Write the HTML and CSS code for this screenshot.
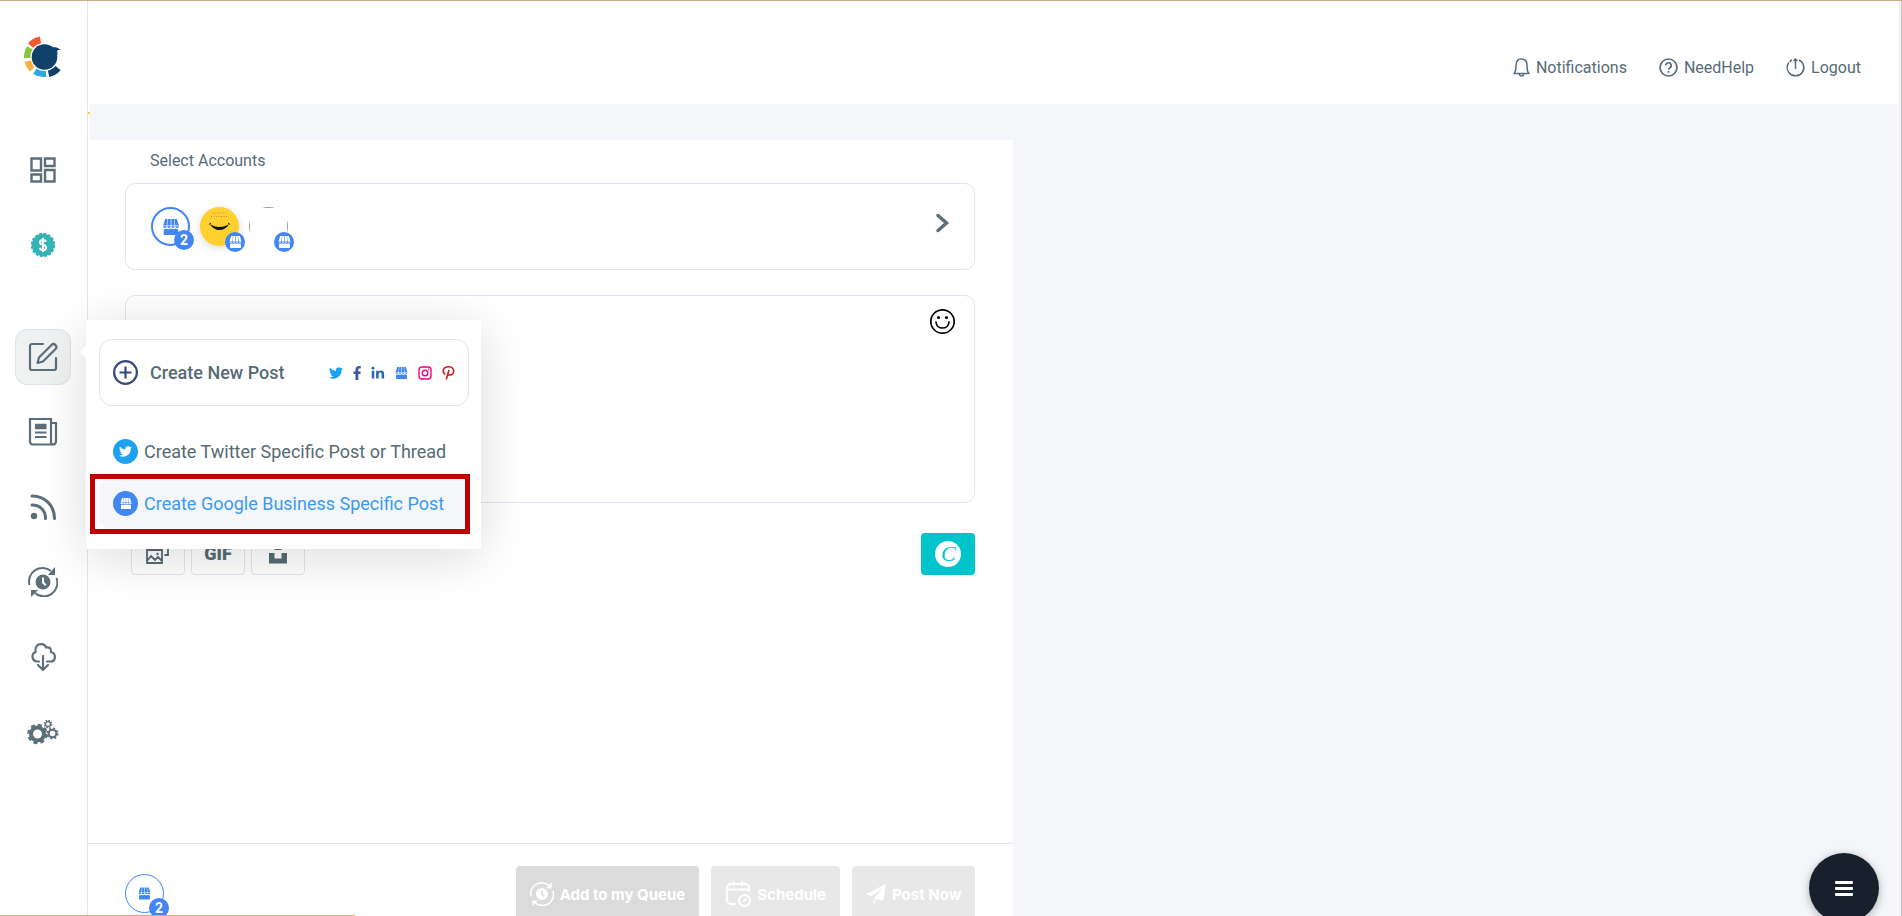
FILE: index.html
```html
<!DOCTYPE html>
<html lang="en">
<head>
    <meta charset="UTF-8">
    <meta name="viewport" content="width=device-width, initial-scale=1.0">
    <title>Create Post</title>
    <link rel="stylesheet" href="styles.css">
</head>
<body>

    <!-- shared icons -->
    <svg class="sprite" aria-hidden="true">
        <symbol id="store" viewBox="0 0 24 22">
            <path d="M4 0h3.3l-1 9H1.2zM8 0h3.5v9H7zM12.5 0H16l1 9h-4.5zM16.7 0H20l2.8 9h-5z"/>
            <path d="M1 10h5a2.5 2.5 0 0 1-5 0zM6.7 10h5a2.5 2.5 0 0 1-5 0zM12.3 10h5a2.5 2.5 0 0 1-5 0zM18 10h5a2.5 2.5 0 0 1-5 0z"/>
            <path d="M2 14c1 .4 2.4.2 3.5-.8 1.5 1.3 4 1.3 6.500 0 2.5 1.3 5 1.3 6.5 0 1 1 2.500 1.2 3.5.8v8H2z"/>
        </symbol>
        <symbol id="twitter" viewBox="0 0 24 24">
            <path d="M24 4.6a10 10 0 0 1-2.8.8 5 5 0 0 0 2.1-2.7 10 10 0 0 1-3.1 1.2 4.9 4.9 0 0 0-8.4 4.5A14 14 0 0 1 1.7 3.2a4.9 4.9 0 0 0 1.5 6.5 5 5 0 0 1-2.2-.6v.1a4.9 4.9 0 0 0 3.9 4.8 5 5 0 0 1-2.2.1 4.9 4.9 0 0 0 4.6 3.4A10 10 0 0 1 0 19.5a14 14 0 0 0 21.5-12.4A10 10 0 0 0 24 4.6z"/>
        </symbol>
        <symbol id="recycle" viewBox="0 0 30 30">
            <path d="M1.5 18A13.5 13.5 0 0 1 23 4M28.5 11A13.5 13.5 0 0 1 7 26" fill="none" stroke="currentColor" stroke-width="2"/>
            <path d="M27 0v8h-7zM3 30v-7h7z"/>
            <path fill-rule="evenodd" d="M15 7.5a7.5 7.5 0 1 0 0 15 7.5 7.5 0 0 0 0-15zM14 10.5h2v4.500l2.5 2.5-1.4 1.4L14 16z"/>
        </symbol>
    </svg>

    <div class="app">
        <aside class="sidebar">
            <a href="#" class="logo" aria-label="Home">
                <svg width="38" height="42" viewBox="0 0 38 42">
                    <g fill="none" stroke-width="7">
                        <path d="M6.5 9.5A18 18 0 0 1 16.5 4" stroke="#f15a2b"/>
                        <path d="M3.5 22A17 17 0 0 1 6 12" stroke="#8bc53f"/>
                        <path d="M8.5 33A18 18 0 0 1 4 25" stroke="#fbb040"/>
                        <path d="M22 37.5A17 17 0 0 1 11 35" stroke="#28a9e1"/>
                        <path d="M34 32A17 17 0 0 1 24.5 37.5" stroke="#0f4069"/>
                    </g>
                    <circle cx="20.5" cy="21" r="14" fill="#fff"/>
                    <circle cx="20.5" cy="21" r="12.8" fill="#0f4069"/>
                    <path d="M26 11c3 1 4-.5 6.5.5 1.5.5 2.5 1.5 4.5 1.7-1.5.9-3 .5-4 1.8l1 4z" fill="#0f4069"/>
                </svg>
            </a>

            <nav class="menu">
                <a href="#" class="menu-item" aria-label="Dashboard">
                    <svg width="26" height="26" viewBox="0 0 26 26" fill="none" stroke="currentColor" stroke-width="2.4">
                        <path d="M1.5 1.5H11v12H1.5zM15 1.5h9.500V9H15zM1.5 17.5H11v7H1.5zM15 13h9.500v11.500H15z"/>
                    </svg>
                </a>
                <a href="#" class="menu-item money" aria-label="Billing">
                    <svg width="26" height="26" viewBox="0 0 26 26">
                        <circle cx="13" cy="13" r="11" fill="#34b3b5"/>
                        <circle cx="13" cy="13" r="10.7" fill="none" stroke="#34b3b5" stroke-width="3" stroke-dasharray="3 1.202"/>
                        <path d="M16.2 9.7c-.5-1.2-1.7-1.700-3.2-1.7-1.7 0-3 .9-3 2.4 0 3.3 6.2 1.6 6.2 5 0 1.6-1.5 2.6-3.2 2.6s-3-.7-3.4-2.2M13 6v14" fill="none" stroke="#fff" stroke-width="2"/>
                    </svg>
                </a>

                <div class="menu-group">
                    <a href="#" class="menu-item active" aria-label="Create post">
                        <svg width="28" height="28" viewBox="0 0 28 28" fill="none" stroke="currentColor" stroke-width="2.2" stroke-linejoin="round" stroke-linecap="round">
                            <path d="M14 1H3a2 2 0 0 0-2 2v22a2 2 0 0 0 2 2h22a2 2 0 0 0 2-2V15"/>
                            <path d="M8.5 20l1.500-5.500L22.500 2a2.800 2.800 0 0 1 4 4L14 18.500z"/>
                        </svg>
                    </a>

                    <div class="popup">
                        <a href="#" class="popup-card">
                            <svg width="25" height="25" viewBox="0 0 25 25" fill="none" stroke="#334b7d" stroke-width="2.2">
                                <circle cx="12.5" cy="12.5" r="11.4"/>
                                <path d="M12.5 6.5v12M6.5 12.5h12"/>
                            </svg>
                            <span class="popup-title">Create New Post</span>
                            <span class="networks">
                                <svg width="14" height="14" fill="#1da1f2"><use href="#twitter"/></svg>
                                <svg width="8" height="14" viewBox="0 0 8 14" fill="#3b5998"><path d="M2.500 14V8H.5V5.500h2v-2C2.500 1.300 3.800 0 6 0h1.800v2.400H6.500c-1 0-1.200.5-1.200 1.200v1.900h2.400L7.400 8H5.300v6z"/></svg>
                                <svg width="14" height="14" viewBox="0 0 15 14" fill="#2867b2"><path d="M.8 4.500h2.700V13H.8zM5.500 4.500h2.600v1.200c1-2 6-2.200 6 2.300v5h-2.700V8.500c0-2.800-3.200-2.500-3.200 0V13H5.500z"/><circle cx="2.200" cy="1.800" r="1.600"/></svg>
                                <svg width="13" height="12" fill="#4285f4"><use href="#store"/></svg>
                                <svg width="14" height="14" viewBox="0 0 14 14" fill="none" stroke="#f0047f" stroke-width="1.400"><rect x="1" y="1" width="12" height="12" rx="3"/><circle cx="7" cy="7" r="2.800"/><path d="M10 3.500h1"/></svg>
                                <svg width="13" height="14" viewBox="0 0 13 14" fill="none" stroke="#c8232c" stroke-width="1.600"><path d="M3.300 8.300C-.8 5.500 1.500.8 6.500.8c6.500 0 6.800 8.200 1.500 8.200-1.200 0-2-.6-2.200-1.300M7 4L4.200 13.500"/></svg>
                            </span>
                        </a>
                        <a href="#" class="popup-row">
                            <span class="round twitter"><svg width="13" height="13"><use href="#twitter"/></svg></span>
                            Create Twitter Specific Post or Thread
                        </a>
                        <a href="#" class="popup-row selected">
                            <span class="round"><svg width="12" height="11"><use href="#store"/></svg></span>
                            Create Google Business Specific Post
                        </a>
                    </div>
                </div>

                <a href="#" class="menu-item" aria-label="Content">
                    <svg width="28" height="28" viewBox="0 0 28 28" fill="none" stroke="currentColor" stroke-width="2.2">
                        <path d="M22 24V1H1v22.500a3 3 0 0 0 3 3h20a3 3 0 0 0 3-3V5h-5v19c0 1.500.8 2.500 2 2.500"/>
                        <path d="M6 8.500h11.500" stroke-width="5.500"/>
                        <path d="M6 14.500h11.500M6 19h11.500"/>
                    </svg>
                </a>
                <a href="#" class="menu-item" aria-label="Feeds">
                    <svg width="26" height="26" viewBox="0 0 26 26" fill="none" stroke="currentColor" stroke-width="3" stroke-linecap="round">
                        <path d="M2 2c13 0 22.500 9.500 22.500 22.500M2 11c8 0 13.500 5.500 13.500 13.500"/>
                        <circle cx="4" cy="22" r="3.200" fill="currentColor" stroke="none"/>
                    </svg>
                </a>
                <a href="#" class="menu-item" aria-label="Queue">
                    <svg width="30" height="30"><use href="#recycle"/></svg>
                </a>
                <a href="#" class="menu-item" aria-label="Import">
                    <svg width="26" height="28" viewBox="0 0 26 28" fill="none" stroke="currentColor" stroke-width="2.200" stroke-linecap="round">
                        <path d="M9 18.500H6.500a5 5 0 0 1-1-9.500C5 3.500 7 1.200 11 1.200c3 0 4.500 1.500 5 3.300 3.500-.8 5.500 1 5 4.500 5.500 1.500 5 9.500-.5 9.500H17"/>
                        <path d="M13 13v14M8 22l5 5 5-5"/>
                    </svg>
                </a>
                <a href="#" class="menu-item" aria-label="Settings">
                    <svg width="32" height="26" viewBox="0 0 32 26" fill="none" stroke="currentColor">
                        <circle cx="10.500" cy="15" r="6.500" stroke-width="4"/>
                        <circle cx="10.500" cy="15" r="9" stroke-width="2.500" stroke-dasharray="4 3.068"/>
                        <circle cx="25.500" cy="14.500" r="3.800" stroke-width="2"/>
                        <circle cx="25.500" cy="14.500" r="5.300" stroke-width="1.600" stroke-dasharray="2 2.163"/>
                        <circle cx="21" cy="5" r="2.500" stroke-width="1.300"/>
                        <circle cx="21" cy="5" r="3.700" stroke-width="1.300" stroke-dasharray="1.500 1.405"/>
                    </svg>
                </a>
            </nav>
        </aside>

        <div class="main">
            <header class="header">
                <a href="#">
                    <svg width="17" height="19" viewBox="0 0 17 19" fill="none" stroke="currentColor" stroke-width="1.500" stroke-linejoin="round">
                        <path d="M1 15.500c1.800-1.500 2-3 2-8C3 3 5.500 1 8.500 1S14 3 14 7.500c0 5 .2 6.500 2 8z"/>
                        <path d="M6.500 16a2 2 0 0 0 4 0"/>
                    </svg>
                    Notifications
                </a>
                <a href="#">
                    <svg width="19" height="19" viewBox="0 0 19 19" fill="none" stroke="currentColor" stroke-width="1.700">
                        <circle cx="9.500" cy="9.500" r="8.500"/>
                        <path d="M6.800 7.500a2.700 2.700 0 1 1 4 2.300c-.9.5-1.300.9-1.300 2M9.500 13v1.800"/>
                    </svg>
                    NeedHelp
                </a>
                <a href="#">
                    <svg width="19" height="19" viewBox="0 0 19 19" fill="none" stroke="currentColor" stroke-width="1.500">
                        <path d="M6 2A8.300 8.300 0 1 0 13 2" stroke-dasharray="3 1 60"/>
                        <path d="M9.500 11V1M7.500 3l2-2 2 2"/>
                    </svg>
                    Logout
                </a>
            </header>
            <div class="strip"></div>

            <main class="composer">
                <div class="composer-body">
                    <h1 class="label">Select Accounts</h1>
                    <section class="accounts">
                        <div class="account store">
                            <svg width="18" height="16"><use href="#store"/></svg>
                            <span class="badge count">2</span>
                        </div>
                        <div class="account smile">
                            <svg width="39" height="39" viewBox="0 0 39 39">
                                <path d="M13 6h13M11 9.500h17" stroke="#a07c2c" stroke-dasharray="1 1.500" opacity=".7"/>
                                <path d="M9 17.500l2-1.500M30 17.500l-2-1.500" stroke="#111"/>
                                <path d="M10 17c5 4 14 4 19 0-4 8-15 8-19 0z" fill="#111"/>
                            </svg>
                            <span class="badge"><svg width="13" height="12"><use href="#store"/></svg></span>
                        </div>
                        <div class="account">
                            <div class="empty-photo"></div>
                            <span class="badge"><svg width="13" height="12"><use href="#store"/></svg></span>
                        </div>
                        <button class="more" aria-label="More accounts">
                            <svg width="13" height="20" viewBox="0 0 13 20" fill="none" stroke="#5b6f7b" stroke-width="3.500" stroke-linecap="round"><path d="M2 2.500l8.500 7.500L2 17.500"/></svg>
                        </button>
                    </section>

                    <section class="editor">
                        <textarea aria-label="Post text"></textarea>
                        <button class="emoji" aria-label="Emoji">
                            <svg width="25" height="25" viewBox="0 0 25 25" fill="none" stroke="#000" stroke-width="1.700">
                                <circle cx="12.500" cy="12.500" r="11.700"/>
                                <path d="M6 13c.5 8 12.500 8 13 0" stroke-linecap="round"/>
                                <circle cx="8.500" cy="8.500" r="1.600" fill="#000" stroke="none"/>
                                <circle cx="16.500" cy="8.500" r="1.600" fill="#000" stroke="none"/>
                            </svg>
                        </button>
                    </section>

                    <div class="toolbar">
                        <button class="tool" aria-label="Image">
                            <svg width="24" height="24" viewBox="0 0 24 24" fill="none" stroke="currentColor" stroke-width="1.800">
                                <path d="M1 8h15v13H1zM1 19l4-5 4 4 3-3 4 4M18.500 13H22V5h-3"/>
                                <circle cx="11.500" cy="12" r="1.200" fill="currentColor" stroke="none"/>
                            </svg>
                        </button>
                        <button class="tool gif">GIF</button>
                        <button class="tool" aria-label="Unsplash">
                            <svg width="18" height="20" viewBox="0 0 18 20" fill="currentColor"><path d="M5.500 1h7v5h-7zM0 9h5.500v5.500h7V9H18v10.500H0z"/></svg>
                        </button>
                        <button class="tool canva" aria-label="Canva"><span>C</span></button>
                    </div>
                </div>

                <footer class="actions">
                    <div class="account store thin">
                        <svg width="13" height="13"><use href="#store"/></svg>
                        <span class="badge count">2</span>
                    </div>
                    <div class="buttons">
                        <button class="btn queue" disabled>
                            <svg width="24" height="24"><use href="#recycle"/></svg>
                            Add to my Queue
                        </button>
                        <button class="btn" disabled>
                            <svg width="26" height="26" viewBox="0 0 26 26" fill="none" stroke="currentColor" stroke-width="2" stroke-linecap="round">
                                <path d="M10 23H6a4 4 0 0 1-4-4V7a4 4 0 0 1 4-4h14a4 4 0 0 1 4 4v3M2 8.500h22M9 1v3M17 1v3"/>
                                <circle cx="19.500" cy="19.500" r="5.500"/>
                                <path d="M19 20l2-2"/>
                            </svg>
                            Schedule
                        </button>
                        <button class="btn" disabled>
                            <svg width="20" height="20" viewBox="0 0 20 20" fill="currentColor"><path d="M20 0L0 10l5 2.500L17 4 7.500 14.500 17 17zM7.500 16v4l3-3.200z"/></svg>
                            Post Now
                        </button>
                    </div>
                </footer>
            </main>
        </div>
        <div class="scrollbar"></div>
    </div>

    <button class="fab" aria-label="Menu"><span></span><span></span><span></span></button>
    <div class="status-line"></div>

</body>
</html>
```

FILE: styles.css
```css
* {
    box-sizing: border-box;
}
body {
    margin: 0;
    font-family: Roboto, "Liberation Sans", sans-serif;
    font-size: 16px;
    color: #566b78;
    background-color: #f4f6fa;
    overflow: hidden;
}
a {
    color: inherit;
    text-decoration: none;
}
button {
    font-family: inherit;
    border: 0;
    padding: 0;
    background: none;
    cursor: pointer;
}
svg {
    display: block;
    flex: none;
    overflow: visible;
}
.sprite {
    position: absolute;
    width: 0;
    height: 0;
}
.app {
    display: flex;
    height: 100vh;
    border-top: 1px solid #c9ab8a;
}

/* sidebar */
.sidebar {
    flex: none;
    width: 88px;
    background-color: #fff;
    border-right: 1px solid #e4e4f0;
}
.logo {
    display: flex;
    justify-content: center;
    padding: 35px 2px 0 0;
}
.menu {
    display: flex;
    flex-direction: column;
    gap: 19px;
    padding: 64px 16px 0 15px;
    color: #5b6f7b;
}
.menu-item {
    display: flex;
    align-items: center;
    justify-content: center;
    height: 56px;
    fill: currentColor;
}
.money {
    margin-bottom: 37px;
}
.menu-group {
    position: relative;
    z-index: 10;
}
.active {
    border: 1px solid #dfe1ee;
    border-radius: 12px;
    background-color: #f0f2f2;
}

/* create post popup */
.popup {
    position: absolute;
    left: 71px;
    top: -9px;
    width: 395px;
    padding: 19px 12px 20px 13px;
    background-color: #fff;
    box-shadow: 0 8px 50px rgba(0, 0, 0, 0.14);
    color: #566b73;
    font-size: 18px;
}
.popup::before {
    content: "";
    position: absolute;
    left: -6px;
    top: 26px;
    border: 6px solid transparent;
    border-left: 0;
    border-right-color: #fff;
}
.popup-card {
    display: flex;
    align-items: center;
    height: 67px;
    padding: 0 13px;
    border: 1px solid #e4e4f0;
    border-radius: 13px;
    margin-bottom: 19px;
}
.popup-title {
    margin-left: 12px;
    font-weight: 500;
}
.networks {
    display: flex;
    align-items: center;
    gap: 10px;
    margin-left: auto;
}
.popup-row {
    display: flex;
    align-items: center;
    gap: 6px;
    height: 52px;
    padding-left: 14px;
    border-radius: 13px;
    white-space: nowrap;
}
.popup-row.selected {
    position: relative;
    background-color: #f4f6fa;
    color: #3b9af0;
}
/* red frame round the selected row */
.popup-row.selected::after {
    content: "";
    position: absolute;
    inset: -3px -1px -5px -9px;
    border: 5px solid #c00000;
}
.round {
    display: flex;
    align-items: center;
    justify-content: center;
    width: 25px;
    height: 25px;
    border-radius: 50%;
    background-color: #4285f4;
    fill: #fff;
}
.round.twitter {
    background-color: #1da1f2;
}

/* header */
.main {
    flex: 1;
    display: flex;
    flex-direction: column;
    min-width: 0;
}
.header {
    flex: none;
    display: flex;
    align-items: center;
    justify-content: flex-end;
    gap: 32px;
    height: 103px;
    padding: 30px 38px 0 0;
    background-color: #fff;
}
.header a {
    display: flex;
    align-items: center;
    gap: 6px;
}
.strip {
    flex: none;
    height: 36px;
    padding-top: 8px;
    border-left: 2px solid #fff;
}
.strip::before {
    content: "";
    display: block;
    width: 2px;
    height: 2px;
    margin-left: -2px;
    background-color: #f0d020;
}

/* composer */
.composer {
    flex: 1;
    display: flex;
    flex-direction: column;
    width: 51.1%;
    background-color: #fff;
    min-height: 0;
}
.composer-body {
    flex: 1;
    padding: 9px 38px 0 37px;
}
.label {
    margin: 0 0 11px;
    padding-left: 25px;
    font-size: 16px;
    font-weight: 400;
    line-height: 23px;
}
.accounts {
    display: flex;
    align-items: center;
    gap: 10px;
    height: 87px;
    padding: 0 25px;
    border: 1px solid #e4e4f0;
    border-radius: 10px;
}
.account {
    position: relative;
    display: flex;
    align-items: center;
    justify-content: center;
    width: 39px;
    height: 39px;
    border-radius: 50%;
}
.account.store {
    border: 2px solid #4285f4;
    fill: #4285f4;
}
.account.store.thin {
    border-width: 1px;
}
.account.smile {
    background-color: #ffd02e;
    box-shadow: 0 2px 8px rgba(0, 0, 0, 0.15);
}
.empty-photo {
    width: 39px;
    height: 39px;
    border-radius: 50%;
    overflow: hidden;
}
.empty-photo::before {
    content: "";
    display: block;
    height: 39px;
    border: 1px solid #999;
}
.badge {
    position: absolute;
    right: -6px;
    bottom: -6px;
    display: flex;
    align-items: center;
    justify-content: center;
    width: 20px;
    height: 20px;
    border-radius: 50%;
    background-color: #4285f4;
    fill: #fff;
    color: #fff;
    font-size: 14px;
    font-weight: 700;
}
.more {
    margin-left: auto;
    padding-bottom: 8px;
}
.editor {
    position: relative;
    margin-top: 25px;
}
.editor textarea {
    display: block;
    width: 100%;
    height: 208px;
    padding: 20px 60px 20px 25px;
    border: 1px solid #e4e4f0;
    border-radius: 10px;
    background-color: #fff;
    font: inherit;
    resize: none;
}
.emoji {
    position: absolute;
    top: 14px;
    right: 20px;
}
.toolbar {
    display: flex;
    gap: 6px;
    margin-top: 30px;
    padding-left: 6px;
}
.tool {
    display: flex;
    align-items: center;
    justify-content: center;
    width: 54px;
    height: 42px;
    border: 1px solid #e4e4f0;
    border-radius: 4px;
    color: #566b73;
}
.gif {
    padding-bottom: 2px;
    font-size: 18px;
    font-weight: 900;
}
.canva {
    margin-left: auto;
    border: 0;
    background-color: #00c4cc;
}
.canva span {
    width: 26px;
    height: 26px;
    border-radius: 50%;
    background-color: #fff;
    color: #00c4cc;
    font-family: "Liberation Serif", serif;
    font-size: 22px;
    font-style: italic;
    line-height: 25px;
}

/* bottom actions */
.actions {
    flex: none;
    display: flex;
    justify-content: space-between;
    height: 73px;
    padding: 22px 38px 0 37px;
    border-top: 1px solid #e4e4f0;
    overflow: hidden;
}
.actions .account {
    margin-top: 8px;
}
.buttons {
    display: flex;
    gap: 12px;
}
.btn {
    display: flex;
    align-items: center;
    gap: 6px;
    height: 56px;
    padding: 0 14px;
    border-radius: 4px;
    background-color: #e8e8e8;
    color: #fff;
    fill: #fff;
    font-family: Inter, sans-serif;
    font-size: 15px;
    font-weight: 700;
}
.queue {
    background-color: #dbdbdb;
}

.scrollbar {
    flex: none;
    width: 3px;
    background-color: #f1f1f1;
    border-right: 1px solid #c1c1c1;
}
.fab {
    position: fixed;
    right: 23px;
    bottom: -7px;
    display: flex;
    flex-direction: column;
    align-items: center;
    justify-content: center;
    gap: 3px;
    width: 70px;
    height: 70px;
    border-radius: 50%;
    background-color: #17212d;
    box-shadow: 0 2px 8px rgba(0, 0, 0, 0.3);
}
.fab span {
    width: 18px;
    height: 3px;
    border-radius: 1px;
    background-color: #fff;
}
.status-line {
    position: fixed;
    left: 0;
    bottom: 0;
    width: 355px;
    height: 1px;
    background-color: #f0a848;
}
```
